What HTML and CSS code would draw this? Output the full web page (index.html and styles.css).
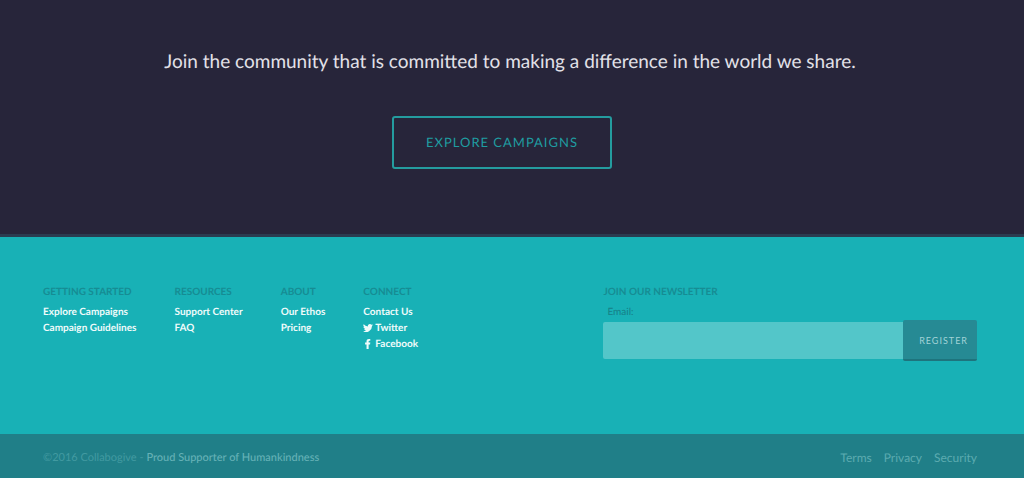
FILE: index.html
```html
<!DOCTYPE html>
<html lang="en">
<head>
<meta charset="utf-8">
<meta name="viewport" content="width=device-width, initial-scale=1">
<title>Collabogive</title>
<link rel="stylesheet" href="styles.css">
</head>
<body>
<section class="hero">
  <h2 class="hero-title">Join the community that is committed to making a difference in the world we share.</h2>
  <a class="hero-button" href="#">Explore Campaigns</a>
</section>
<footer class="footer">
  <div class="footer-main">
    <nav class="link-groups">
      <div class="group">
        <h3 class="heading">Getting Started</h3>
        <a href="#">Explore Campaigns</a>
        <a href="#">Campaign Guidelines</a>
      </div>
      <div class="group">
        <h3 class="heading">Resources</h3>
        <a href="#">Support Center</a>
        <a href="#">FAQ</a>
      </div>
      <div class="group">
        <h3 class="heading">About</h3>
        <a href="#">Our Ethos</a>
        <a href="#">Pricing</a>
      </div>
      <div class="group">
        <h3 class="heading">Connect</h3>
        <a href="#">Contact Us</a>
        <a class="social" href="#"><svg class="icon" viewBox="0 0 24 24" aria-hidden="true"><path d="M24 4.600a10 10 0 0 1-2.800.8 5 5 0 0 0 2.100-2.700 10 10 0 0 1-3.100 1.200 4.900 4.900 0 0 0-8.400 4.500A14 14 0 0 1 1.700 3.100a4.900 4.900 0 0 0 1.500 6.600 4.900 4.900 0 0 1-2.200-.6v.1a4.900 4.900 0 0 0 3.900 4.800 5 5 0 0 1-2.200.1 4.900 4.900 0 0 0 4.600 3.400A10 10 0 0 1 0 19.500a14 14 0 0 0 21.500-12.400A10 10 0 0 0 24 4.600z"/></svg>Twitter</a>
        <a class="social" href="#"><svg class="icon" viewBox="0 0 24 24" aria-hidden="true"><path d="M8.500 24V13H5V8.500h3.500V5.500C8.500 1.900 10.500 0 14.300 0c1.500 0 2.700.1 3.200.2v4h-2.200c-1.400 0-1.800.8-1.800 2v2.300h4l-.6 4.500h-3.400v11z"/></svg>Facebook</a>
      </div>
    </nav>
    <form class="newsletter">
      <h3 class="heading">Join Our Newsletter</h3>
      <label class="email-label" for="email">Email:</label>
      <div class="field">
        <input class="email" id="email" type="email">
        <button class="register" type="button">Register</button>
      </div>
    </form>
  </div>
  <div class="legal">
    <p class="copyright">©2016 Collabogive - <span class="tagline">Proud Supporter of Humankindness</span></p>
    <nav class="legal-links">
      <a href="#">Terms</a>
      <a href="#">Privacy</a>
      <a href="#">Security</a>
    </nav>
  </div>
</footer>
</body>
</html>
```
FILE: styles.css
```css
* { box-sizing: border-box; }

body {
  margin: 0;
  background: #207f88;
  font-family: Lato, "Liberation Sans", sans-serif;
  text-rendering: geometricPrecision;
}

h2, h3, p { margin: 0; }
a { color: inherit; text-decoration: none; }

.hero {
  display: flex;
  flex-direction: column;
  align-items: center;
  padding: 46px 47px 65px 43px;
  background: #27253a;
  border-bottom: 3px solid #2b3c50;
}

.hero-title {
  color: #e2e1e8;
  font-size: 19px;
  font-weight: 400;
  line-height: 32px;
  text-align: center;
}

.hero-button {
  margin: 38px 16px 0 0;
  padding: 14px 32px;
  border: 2px solid #249c9f;
  border-radius: 3px;
  color: #1f9da1;
  font-size: 13px;
  line-height: 21px;
  letter-spacing: 1px;
  text-transform: uppercase;
}

.footer-main {
  display: flex;
  justify-content: space-between;
  gap: 40px;
  padding: 47px 47px 73px 43px;
  background: #18b1b6;
}

.link-groups {
  display: flex;
  gap: 38px;
}

.group {
  display: flex;
  flex-direction: column;
  color: #f0fbfb;
  font-size: 10px;
  font-weight: 700;
  line-height: 16px;
}

.heading {
  margin-bottom: 4px;
  color: #168c93;
  font-size: 10px;
  font-weight: 700;
  line-height: 16px;
  text-transform: uppercase;
}

.social {
  display: flex;
  align-items: center;
  gap: 2px;
}

.icon {
  width: 10px;
  height: 10px;
  fill: currentColor;
}

.newsletter {
  flex: 0 1 40%;
}

.email-label {
  display: block;
  padding-left: 4px;
  color: #168087;
  font-size: 10px;
  line-height: 16px;
}

.field {
  display: flex;
  align-items: center;
}

.email {
  flex: 1;
  min-width: 0;
  height: 37px;
  padding: 0 10px;
  border: 0;
  border-radius: 2px 0 0 2px;
  background: #53c6c9;
  font: 13px Lato, sans-serif;
}

.register {
  height: 41px;
  padding: 2px 9px 0 16px;
  border: 0;
  border-bottom: 2px solid #1e747d;
  border-radius: 2px;
  background: #268a94;
  color: #a2d3d7;
  font: 9px Lato, sans-serif;
  letter-spacing: 1px;
  text-transform: uppercase;
}

.legal {
  display: flex;
  justify-content: space-between;
  gap: 24px;
  padding: 16px 47px 12px 43px;
  background: #207f88;
  color: #5cabb0;
  font-size: 12px;
  line-height: 16px;
}

.copyright {
  color: #429aa1;
  font-size: 11px;
}

.tagline {
  color: #65b1b6;
  font-weight: 500;
}

.legal-links {
  display: flex;
  gap: 12px;
}
```
